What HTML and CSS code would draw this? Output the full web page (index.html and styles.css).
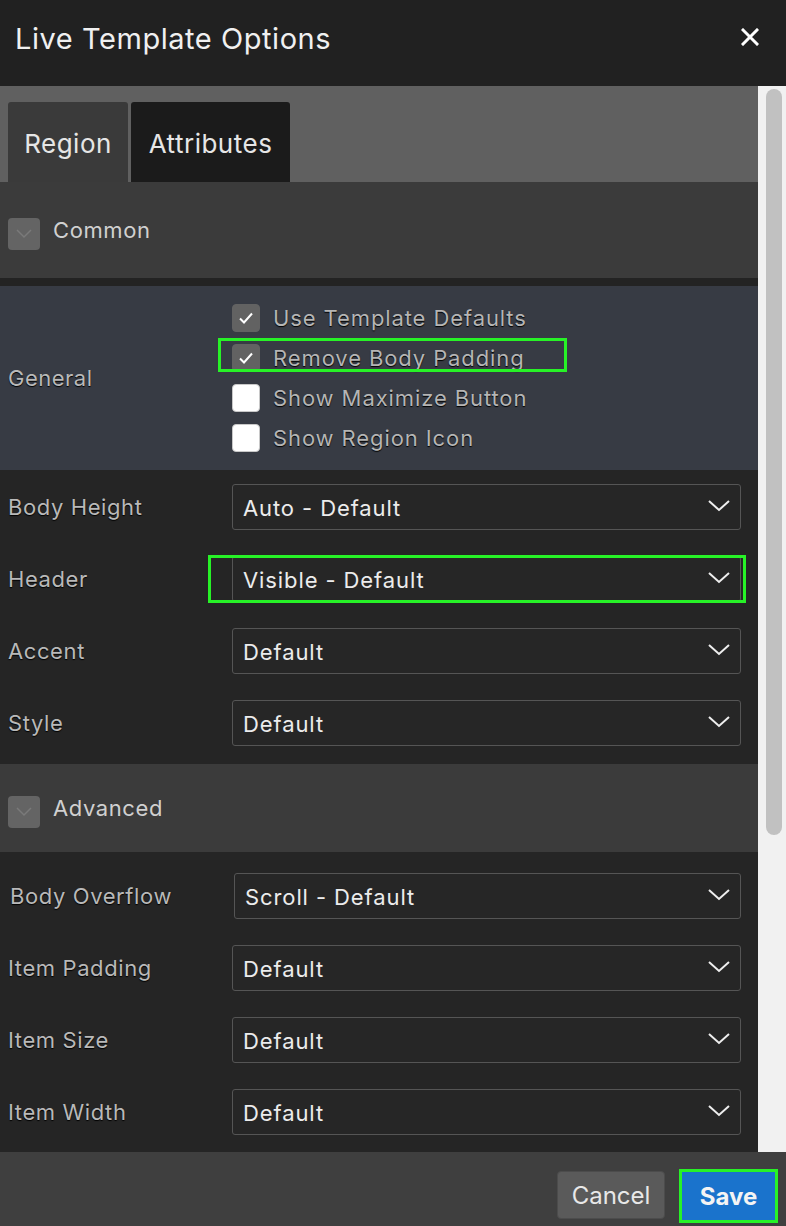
FILE: index.html
```html
<!DOCTYPE html>
<html>
<head>
<meta charset="utf-8">
<link rel="stylesheet" href="styles.css">
</head>
<body>
<div class="dialog">
  <header class="dlg-head">
    <h1 class="dlg-title">Live Template Options</h1>
    <span class="dlg-close">
      <svg width="18" height="18" viewBox="0 0 18 18"><path d="M2 2 L16 16 M16 2 L2 16" stroke="#fff" stroke-width="3" stroke-linecap="square"/></svg>
    </span>
  </header>
  <div class="dlg-body">
    <div class="content">
      <div class="tabs">
        <div class="tab tab-region">Region</div>
        <div class="tab tab-active">Attributes</div>
      </div>

      <div class="sec-head sec-common">
        <span class="toggle"><svg width="20" height="12" viewBox="0 0 20 12"><path d="M3 2 L10 9 L17 2" fill="none" stroke="#7a7a7a" stroke-width="1.5"/></svg></span>
        <span class="sec-title">Common</span>
      </div>

      <div class="general">
        <div class="gen-label">General</div>
        <div class="checks">
          <div class="check"><span class="box box-on"><svg width="16" height="14" viewBox="0 0 16 14"><path d="M2 7.5 L6 11.5 L14 2.5" fill="none" stroke="#fff" stroke-width="2"/></svg></span><span class="check-text">Use Template Defaults</span></div>
          <div class="check"><span class="box box-on"><svg width="16" height="14" viewBox="0 0 16 14"><path d="M2 7.5 L6 11.5 L14 2.5" fill="none" stroke="#fff" stroke-width="2"/></svg></span><span class="check-text">Remove Body Padding</span></div>
          <div class="check"><span class="box"></span><span class="check-text">Show Maximize Button</span></div>
          <div class="check"><span class="box"></span><span class="check-text">Show Region Icon</span></div>
          <div class="hl hl-check"></div>
        </div>
      </div>

      <div class="rows rows-common">
        <div class="row"><div class="lbl">Body Height</div><div class="sel"><span>Auto - Default</span><svg class="chev" width="24" height="14" viewBox="0 0 24 14"><path d="M2 2 L12 11 L22 2" fill="none" stroke="#eee" stroke-width="2"/></svg></div></div>
        <div class="row"><div class="lbl">Header</div><div class="sel"><span>Visible - Default</span><svg class="chev" width="24" height="14" viewBox="0 0 24 14"><path d="M2 2 L12 11 L22 2" fill="none" stroke="#eee" stroke-width="2"/></svg><div class="hl hl-sel"></div></div></div>
        <div class="row"><div class="lbl">Accent</div><div class="sel"><span>Default</span><svg class="chev" width="24" height="14" viewBox="0 0 24 14"><path d="M2 2 L12 11 L22 2" fill="none" stroke="#eee" stroke-width="2"/></svg></div></div>
        <div class="row"><div class="lbl">Style</div><div class="sel"><span>Default</span><svg class="chev" width="24" height="14" viewBox="0 0 24 14"><path d="M2 2 L12 11 L22 2" fill="none" stroke="#eee" stroke-width="2"/></svg></div></div>
      </div>

      <div class="sec-head sec-adv">
        <span class="toggle"><svg width="20" height="12" viewBox="0 0 20 12"><path d="M3 2 L10 9 L17 2" fill="none" stroke="#7a7a7a" stroke-width="1.5"/></svg></span>
        <span class="sec-title">Advanced</span>
      </div>

      <div class="rows rows-adv">
        <div class="row row-shift"><div class="lbl">Body Overflow</div><div class="sel"><span>Scroll - Default</span><svg class="chev" width="24" height="14" viewBox="0 0 24 14"><path d="M2 2 L12 11 L22 2" fill="none" stroke="#eee" stroke-width="2"/></svg></div></div>
        <div class="row"><div class="lbl">Item Padding</div><div class="sel"><span>Default</span><svg class="chev" width="24" height="14" viewBox="0 0 24 14"><path d="M2 2 L12 11 L22 2" fill="none" stroke="#eee" stroke-width="2"/></svg></div></div>
        <div class="row"><div class="lbl">Item Size</div><div class="sel"><span>Default</span><svg class="chev" width="24" height="14" viewBox="0 0 24 14"><path d="M2 2 L12 11 L22 2" fill="none" stroke="#eee" stroke-width="2"/></svg></div></div>
        <div class="row"><div class="lbl">Item Width</div><div class="sel"><span>Default</span><svg class="chev" width="24" height="14" viewBox="0 0 24 14"><path d="M2 2 L12 11 L22 2" fill="none" stroke="#eee" stroke-width="2"/></svg></div></div>
      </div>
    </div>
    <div class="scrollbar"><div class="thumb"></div></div>
  </div>
  <footer class="dlg-foot">
    <button class="btn btn-cancel">Cancel</button>
    <button class="btn btn-save">Save</button>
  </footer>
</div>
</body>
</html>
```

FILE: styles.css
```css
* { box-sizing: border-box; }
html, body { margin: 0; padding: 0; }
body {
  width: 786px;
  height: 1226px;
  background: #212121;
  font-family: Inter, "Noto Sans", "Liberation Sans", sans-serif;
  overflow: hidden;
}
.dialog {
  width: 786px;
  height: 1226px;
  display: flex;
  flex-direction: column;
}
.dlg-head {
  height: 86px;
  flex: 0 0 86px;
  background: #212121;
  display: flex;
  align-items: flex-start;
  justify-content: space-between;
  padding: 0 27px 0 15px;
}
.dlg-title {
  margin: 0;
  margin-top: 21px;
  font-size: 29px;
  font-weight: 400;
  color: #f0f0f0;
  letter-spacing: 0.55px;
  line-height: 36px;
}
.dlg-close {
  margin-top: 28px;
  display: flex;
}
.dlg-body {
  flex: 1 1 auto;
  display: flex;
  min-height: 0;
}
.content {
  width: 758px;
  flex: 0 0 758px;
  display: flex;
  flex-direction: column;
  background: #252525;
}
.scrollbar {
  flex: 1 1 auto;
  background: #f1f1f1;
  padding: 3px 4px 0 8px;
}
.thumb {
  width: 16px;
  height: 746px;
  background: #c1c1c1;
  border-radius: 8px;
}
.tabs {
  height: 96px;
  flex: 0 0 96px;
  background: #606060;
  display: flex;
  align-items: flex-end;
  gap: 3px;
  padding-left: 8px;
}
.tab {
  height: 80px;
  background: #3a3a3a;
  border-radius: 3px 3px 0 0;
  color: #e6e6e6;
  font-size: 26px;
  letter-spacing: 0.5px;
  display: flex;
  align-items: center;
  justify-content: center;
  padding-top: 2px;
}
.tab-region { width: 120px; }
.tab-active {
  background: #1b1b1b;
  width: 159px;
}
.sec-head {
  background: #3b3b3b;
  display: flex;
  align-items: center;
  padding-left: 8px;
  gap: 13px;
}
.sec-common { height: 104px; flex: 0 0 104px; border-bottom: 8px solid #232323; }
.sec-adv { height: 88px; flex: 0 0 88px; }
.toggle {
  width: 32px;
  height: 32px;
  border-radius: 4px;
  background: #646464;
  display: flex;
  align-items: center;
  justify-content: center;
  margin-top: 8px;
}
.sec-title {
  font-size: 22px;
  color: #d0d0d0;
  letter-spacing: 0.6px;
  margin-bottom: 1px;
}
.general {
  height: 184px;
  flex: 0 0 184px;
  background: #373b44;
  display: flex;
  align-items: center;
}
.gen-label {
  width: 232px;
  padding-left: 8px;
  font-size: 22px;
  color: #b9b9b9;
  text-shadow: 0 1px 1px #000;
  letter-spacing: 0.5px;
}
.checks {
  position: relative;
  display: flex;
  flex-direction: column;
}
.check {
  height: 40px;
  display: flex;
  align-items: center;
  gap: 13px;
}
.box {
  width: 28px;
  height: 28px;
  border-radius: 4px;
  background: #fff;
  border: 1px solid #c8c8c8;
  display: flex;
  align-items: center;
  justify-content: center;
}
.box-on {
  background: #626262;
  border-color: #626262;
}
.check-text {
  font-size: 22px;
  color: #b5b5b5;
  letter-spacing: 0.9px;
  text-shadow: 0 1px 1px #000;
}
.hl {
  position: absolute;
  border: 3px solid #27f227;
  pointer-events: none;
}
.hl-check {
  left: -14px;
  top: 40px;
  width: 349px;
  height: 34px;
}
.rows {
  display: flex;
  flex-direction: column;
}
.rows-common { height: 294px; flex: 0 0 294px; padding-top: 1px; }
.rows-adv { flex: 1 1 auto; padding-top: 8px; }
.row {
  height: 72px;
  flex: 0 0 72px;
  display: flex;
  align-items: center;
}
.lbl {
  width: 232px;
  flex: 0 0 232px;
  padding-left: 8px;
  font-size: 22px;
  color: #b9b9b9;
  text-shadow: 0 1px 1px #000;
  letter-spacing: 0.6px;
}
.row-shift .lbl { padding-left: 10px; flex-basis: 234px; width: 234px; }
.row-shift .sel { width: 507px; }
.sel {
  position: relative;
  width: 509px;
  height: 46px;
  border: 1px solid #555;
  border-radius: 3px;
  background: #262626;
  display: flex;
  align-items: center;
  justify-content: space-between;
  padding: 0 9px 0 10px;
  color: #ececec;
  font-size: 22px;
}
.sel span { margin-top: 2px; letter-spacing: 0.9px; }
.chev { margin-bottom: 2px; }
.hl-sel {
  left: -25px;
  top: -2px;
  width: 538px;
  height: 48px;
}
.dlg-foot {
  height: 74px;
  flex: 0 0 74px;
  background: #3f3f3f;
  display: flex;
  align-items: flex-start;
  justify-content: flex-end;
  gap: 17px;
  padding: 19px 11px 0 0;
}
.btn {
  font-family: Inter, "Noto Sans", "Liberation Sans", sans-serif;
  font-size: 24px;
  height: 48px;
  border-radius: 4px;
  cursor: pointer;
}
.btn-cancel {
  width: 108px;
  background: #5a5a5a;
  border: 1px solid #4c4c4c;
  color: #e8e8e8;
}
.btn-save {
  width: 93px;
  margin-top: 1px;
  background: #1a73cc;
  color: #f4f4f4;
  font-weight: 700;
  border: none;
  border-radius: 0;
  outline: 3px solid #27f227;
  outline-offset: 0;
}
```
